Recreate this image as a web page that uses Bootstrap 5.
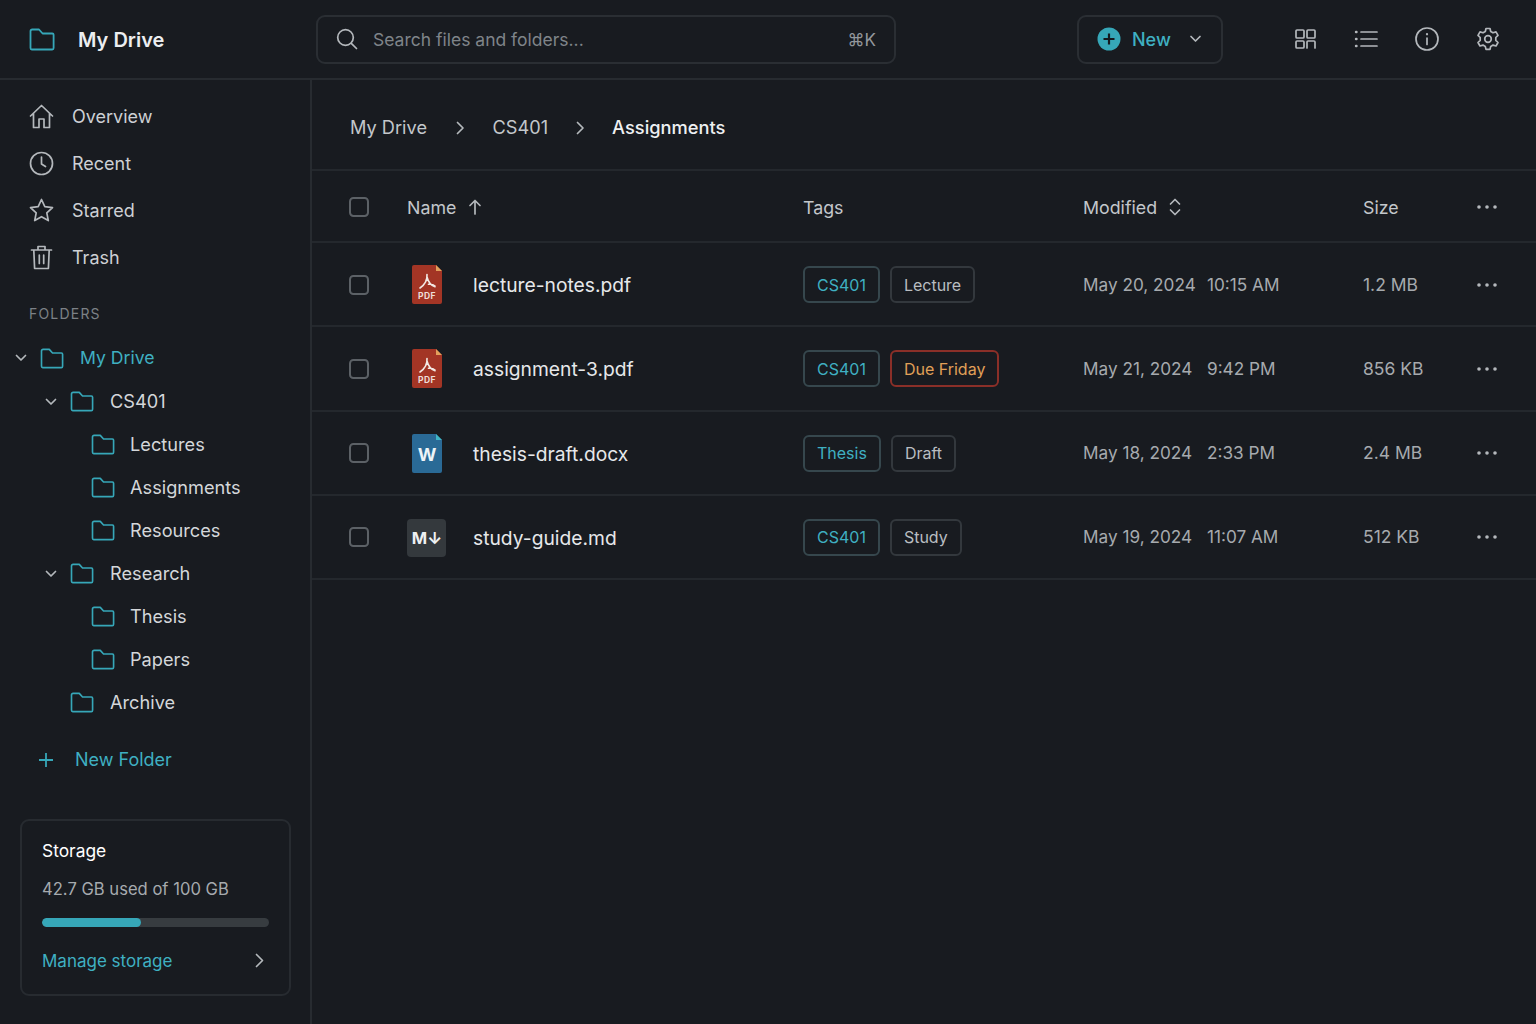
<!DOCTYPE html>
<html lang="en">
<head>
  <meta charset="UTF-8">
  <meta name="viewport" content="width=device-width, initial-scale=1">
  <title>My Drive</title>
  <link href="https://cdn.jsdelivr.net/npm/bootstrap@5.3.2/dist/css/bootstrap.min.css" rel="stylesheet">
  <style>
    html, body { height: 100%; }
    body { background: #181b20; color: #d4d7da; font-family: Inter, "Liberation Sans", sans-serif; font-size: 18px; overflow: hidden; }
    svg { display: block; flex: none; }
    .ico { fill: none; stroke: #b4b8bc; stroke-width: 1.7; stroke-linecap: round; stroke-linejoin: round; }
    .teal-ico { fill: none; stroke: #36a7b8; stroke-width: 1.8; stroke-linejoin: round; }
    .teal { color: #3fb0c2; }

    .top-bar { height: 80px; border-bottom: 2px solid #272b30; }
    .brand-box { width: 316px; padding: 1px 0 0 29px; gap: 23px; font-size: 20px; font-weight: 600; color: #eceef0; }
    .brand-box svg { margin-top: -1px; }
    .search-box { width: 580px; height: 49px; border: 2px solid #2a2e33; border-radius: 9px; padding: 0 18px; gap: 15px; color: #7f8489; margin-right: 181px; font-size: 17.5px; }
    .search-box span { padding-top: 3px; }
    .search-kbd { color: #93979c; font-size: 17px; }
    .new-btn { width: 146px; height: 49px; border: 2px solid #2a2e33; border-radius: 9px; padding-left: 18px; gap: 11px; color: #3fb0c2; font-weight: 500; }
    .new-btn svg:last-child { margin-left: 7px; }
    .tool-icons { margin-left: 70px; gap: 37px; }

    .side-pane { width: 312px; height: 944px; border-right: 2px solid #272b30; flex: none; }
    .side-nav { padding-top: 13px; }
    .side-link { height: 47px; padding-left: 29px; gap: 18px; color: #cdd0d4; }
    .side-title { font-size: 14px; letter-spacing: 1.2px; color: #7c8186; padding-left: 29px; margin-top: 24px; margin-bottom: 14px; line-height: 17px; }
    .tree-row { height: 43px; gap: 17px; color: #d4d7da; font-size: 18.2px; }
    .tree-row > span { margin-left: -1px; }
    .tree-first { height: 44px; }
    .tree-first .teal { font-size: 17.6px; }
    .tree-row .tree-caret { width: 12px; margin-right: -4px; }
    .lvl0 { padding-left: 15px; }
    .lvl1 { padding-left: 45px; }
    .lvl2 { padding-left: 91px; gap: 15px; }
    .lvl1-flat { padding-left: 70px; }
    .add-folder { padding-left: 37px; gap: 20px; height: 43px; margin-top: 14px; color: #3fb0c2; }
    .store-card { background: transparent; border: 2px solid #272b30; border-radius: 9px; margin: auto 20px 28px; height: 177px; padding: 17px 20px 0 20px; font-size: 17px; width: 271px; }
    .store-name { font-size: 17.4px; }
    .store-used { margin-top: 13px; font-size: 16.6px; color: #a6aaae; }
    .store-bar { height: 9px; background: #373c40; border-radius: 5px; margin-top: 16px; }
    .store-bar .progress-bar { background: #36a7b8; border-radius: 5px; }
    .store-link { margin-top: 22px; }
    .store-link svg { margin: -2px 5px 0 0; }

    .crumb-bar { height: 91px; border-bottom: 2px solid #24282d; padding: 6px 0 0 38px; font-size: 18.2px; color: #c3c7cb; }
    .crumb-sep { margin: 0 27.5px 0 29px; }
    .crumb-sep-b { margin: 0 27.5px 0 27.5px; }
    .crumb-now { color: #eef0f2; font-weight: 500; font-size: 18.3px; }

    .file-grid { display: grid; grid-template-columns: 58px 396px 280px 280px 114px 1fr; align-items: center; padding: 1px 0 0 37px; border-bottom: 2px solid #24282d; }
    .head-row { height: 72px; color: #c3c7cb; font-size: 17.8px; }
    .head-row > div { margin-top: 3px; }
    .head-row > div svg { margin-top: -3px; }
    .body-row { height: 84.25px; font-size: 17.5px; }
    .tick { width: 20px; height: 20px; border: 2px solid #5c6166; border-radius: 3px; background: transparent; margin: 0; }
    .tick:focus { box-shadow: none; border-color: #5c6166; }
    .file-name { gap: 27px; font-size: 19.25px; color: #e6e8ea; }
    .file-name span { padding-top: 2px; }
    .file-ico { width: 39px; }
    .md-ico { margin-top: 2px; }
    .tag-chip { height: 37px; padding: 0 12px; border: 2px solid #33383d; border-radius: 6px; font-size: 16px; color: #b9bdc1; background: transparent; }
    .tag-row { gap: 10px; }
    .tag-teal { color: #3fb0c2; border-color: #36474d; }
    .tag-due { color: #e0a058; border-color: #8a2f28; }
    .date-cell { color: #a6aaae; font-size: 17.2px; }
    .date-part { display: inline-block; width: 124px; }
    .size-cell { color: #a6aaae; }
  </style>
</head>
<body>
  <svg width="0" height="0" class="position-absolute">
    <symbol id="folder" viewBox="0 0 26 23"><path d="M1.500 3.200C1.500 2.200 2.200 1.500 3.200 1.500H10l3.600 4H23.300c.8 0 1.300.5 1.300 1.300V20c0 .9-.5 1.500-1.400 1.500H2.800c-.8 0-1.300-.6-1.300-1.400z"/></symbol>
    <symbol id="caret" viewBox="0 0 12 8"><path d="M1.500 1.500 6 6l4.500-4.500"/></symbol>
    <symbol id="more" viewBox="0 0 20 4"><circle cx="2" cy="2" r="1.800" fill="#b4b8bc"/><circle cx="10" cy="2" r="1.800" fill="#b4b8bc"/><circle cx="18" cy="2" r="1.800" fill="#b4b8bc"/></symbol>
    <symbol id="pdf" viewBox="0 0 30 39"><path d="M2 0H24L30 6V37a2 2 0 0 1-2 2H2a2 2 0 0 1-2-2V2a2 2 0 0 1 2-2z" fill="#a33525"/><path d="M24 0 30 6H24z" fill="#e3a05c"/><path d="M15 9.500c.4 5-2 10-7 13.500M15 12c1 4 3 8 8 9.800M16.500 19.300c2.500-.3 4.700 0 6.500 1.700" fill="none" stroke="#f2e9e4" stroke-width="1.600" stroke-linecap="round"/></symbol>
    <symbol id="word" viewBox="0 0 30 39"><path d="M2 0H24L30 6V37a2 2 0 0 1-2 2H2a2 2 0 0 1-2-2V2a2 2 0 0 1 2-2z" fill="#2a6a96"/><path d="M24 0 30 6H24z" fill="#3fb6c6"/></symbol>
  </svg>

  <header class="top-bar d-flex align-items-center">
    <div class="brand-box d-flex align-items-center">
      <svg width="26" height="23" class="teal-ico"><use href="#folder"/></svg>
      My Drive
    </div>
    <div class="search-box d-flex align-items-center">
      <svg width="22" height="22" viewBox="0 0 22 22" class="ico"><circle cx="9.500" cy="9.500" r="7.800"/><path d="m15.300 15.300 5.200 5.200"/></svg>
      <span class="flex-grow-1">Search files and folders...</span>
      <span class="search-kbd">⌘K</span>
    </div>
    <div class="new-btn d-flex align-items-center">
      <svg width="24" height="24" viewBox="0 0 24 24"><circle cx="12" cy="12" r="11.500" fill="#36a7b8"/><path d="M12 6.500v11M6.500 12h11" stroke="#14191e" stroke-width="2.200"/></svg>
      New
      <svg width="13" height="8" class="ico"><use href="#caret"/></svg>
    </div>
    <div class="tool-icons d-flex align-items-center">
      <svg width="24" height="24" viewBox="0 0 24 24" class="ico"><rect x="3" y="3" width="8" height="8" rx="1"/><rect x="14" y="3" width="8" height="8" rx="1"/><rect x="3" y="14" width="8" height="7" rx="1"/><path d="M14 21v-6a1 1 0 0 1 1-1h6a1 1 0 0 1 1 1v6"/></svg>
      <svg width="24" height="24" viewBox="0 0 24 24" class="ico"><path d="M7 5h16M7 12h16M7 19h16"/><path d="M2 5h.5M2 12h.5M2 19h.5" stroke-width="2.400"/></svg>
      <svg width="24" height="24" viewBox="0 0 24 24" class="ico"><circle cx="12" cy="12" r="11"/><path d="M12 11v6.500"/><path d="M12 7v.3" stroke-width="2.200"/></svg>
      <svg width="24" height="24" viewBox="0 0 24 24" class="ico"><circle cx="12" cy="12" r="3.300"/><path d="M10 1.500h4l.7 3 2.300 1.300 3-.9 2 3.500-2.200 2.100v2.900l2.200 2.100-2 3.500-3-.9-2.300 1.300-.7 3h-4l-.7-3L7 18.100l-3 .9-2-3.500 2.200-2.100v-2.900L2 8.400l2-3.500 3 .9 2.300-1.300z"/></svg>
    </div>
  </header>

  <div class="d-flex">
    <aside class="side-pane d-flex flex-column">
      <nav class="nav flex-column side-nav">
        <a class="side-link d-flex align-items-center text-decoration-none" href="#">
          <svg width="25" height="25" viewBox="0 0 25 25" class="ico"><path d="M1.500 12 12.500 1.500 23.500 12M4.500 9.500V23.500H10V15h5v8.500h5.500V9.500"/></svg>Overview</a>
        <a class="side-link d-flex align-items-center text-decoration-none" href="#">
          <svg width="25" height="25" viewBox="0 0 25 25" class="ico"><circle cx="12.500" cy="12.500" r="11"/><path d="M12.500 6v7l4 2.500"/></svg>Recent</a>
        <a class="side-link d-flex align-items-center text-decoration-none" href="#">
          <svg width="25" height="25" viewBox="0 0 25 25" class="ico"><path d="m12.500 1.500 3.300 7.200 7.700.9-5.700 5.300 1.500 7.700-6.800-3.900-6.800 3.900 1.500-7.700-5.700-5.300 7.700-.9z"/></svg>Starred</a>
        <a class="side-link d-flex align-items-center text-decoration-none" href="#">
          <svg width="25" height="25" viewBox="0 0 25 25" class="ico"><path d="M2.500 5h20M9 5V1.500h7V5M4.800 5l.8 18.500h13.800L20.200 5M10.300 10v8.500M14.700 10v8.500"/></svg>Trash</a>
      </nav>

      <div class="side-title">FOLDERS</div>

      <div class="tree-row tree-first lvl0 d-flex align-items-center"><svg width="12" height="8" class="ico tree-caret"><use href="#caret"/></svg><svg width="24" height="21" class="teal-ico"><use href="#folder"/></svg><span class="teal">My Drive</span></div>
      <div class="tree-row lvl1 d-flex align-items-center"><svg width="12" height="8" class="ico tree-caret"><use href="#caret"/></svg><svg width="24" height="21" class="teal-ico"><use href="#folder"/></svg><span>CS401</span></div>
      <div class="tree-row lvl2 d-flex align-items-center"><svg width="24" height="21" class="teal-ico"><use href="#folder"/></svg>Lectures</div>
      <div class="tree-row lvl2 d-flex align-items-center"><svg width="24" height="21" class="teal-ico"><use href="#folder"/></svg>Assignments</div>
      <div class="tree-row lvl2 d-flex align-items-center"><svg width="24" height="21" class="teal-ico"><use href="#folder"/></svg>Resources</div>
      <div class="tree-row lvl1 d-flex align-items-center"><svg width="12" height="8" class="ico tree-caret"><use href="#caret"/></svg><svg width="24" height="21" class="teal-ico"><use href="#folder"/></svg><span>Research</span></div>
      <div class="tree-row lvl2 d-flex align-items-center"><svg width="24" height="21" class="teal-ico"><use href="#folder"/></svg>Thesis</div>
      <div class="tree-row lvl2 d-flex align-items-center"><svg width="24" height="21" class="teal-ico"><use href="#folder"/></svg>Papers</div>
      <div class="tree-row lvl1-flat d-flex align-items-center"><svg width="24" height="21" class="teal-ico"><use href="#folder"/></svg><span>Archive</span></div>

      <div class="add-folder d-flex align-items-center">
        <svg width="18" height="18" viewBox="0 0 18 18"><path d="M9 2v14M2 9h14" stroke="#36a7b8" stroke-width="1.800"/></svg>
        New Folder
      </div>

      <div class="card store-card">
        <div class="store-name text-white">Storage</div>
        <div class="store-used">42.7 GB used of 100 GB</div>
        <div class="progress store-bar"><div class="progress-bar" style="width: 43.5%"></div></div>
        <div class="store-link d-flex align-items-center justify-content-between teal">
          Manage storage
          <svg width="9" height="15" viewBox="0 0 9 15" class="ico"><path d="m1.500 1.500 6 6-6 6"/></svg>
        </div>
      </div>
    </aside>

    <main class="flex-grow-1">
      <div class="crumb-bar d-flex align-items-center">
        My Drive
        <svg width="9" height="14" viewBox="0 0 9 14" class="ico crumb-sep"><path d="m1.500 1.500 5.500 5.500-5.500 5.500"/></svg>
        CS401
        <svg width="9" height="14" viewBox="0 0 9 14" class="ico crumb-sep-b"><path d="m1.500 1.500 5.500 5.500-5.500 5.500"/></svg>
        <span class="crumb-now">Assignments</span>
      </div>

      <div class="file-grid head-row">
        <input class="form-check-input tick" type="checkbox">
        <div class="d-flex align-items-center gap-2">Name <svg width="14" height="16" viewBox="0 0 14 16" class="ico ms-1"><path d="M7 15V1.500M2 6.500l5-5 5 5"/></svg></div>
        <div>Tags</div>
        <div class="d-flex align-items-center gap-2">Modified <svg width="12" height="18" viewBox="0 0 12 18" class="ico ms-1"><path d="m1.500 6 4.500-4.500L10.500 6M1.500 12l4.500 4.500 4.500-4.500"/></svg></div>
        <div>Size</div>
        <svg width="20" height="4"><use href="#more"/></svg>
      </div>

      <div class="file-grid body-row">
        <input class="form-check-input tick" type="checkbox">
        <div class="file-name d-flex align-items-center"><div class="file-ico d-flex justify-content-center"><svg width="30" height="39" viewBox="0 0 30 39"><use href="#pdf"/><text x="15" y="34" text-anchor="middle" font-family="Inter, sans-serif" font-size="8.500" font-weight="700" letter-spacing=".5" fill="#eeddd8">PDF</text></svg></div><span>lecture-notes.pdf</span></div>
        <div class="tag-row d-flex"><span class="tag-chip tag-teal d-flex align-items-center">CS401</span><span class="tag-chip d-flex align-items-center">Lecture</span></div>
        <div class="date-cell"><span class="date-part">May 20, 2024</span>10:15 AM</div>
        <div class="size-cell">1.2 MB</div>
        <svg width="20" height="4"><use href="#more"/></svg>
      </div>
      <div class="file-grid body-row">
        <input class="form-check-input tick" type="checkbox">
        <div class="file-name d-flex align-items-center"><div class="file-ico d-flex justify-content-center"><svg width="30" height="39" viewBox="0 0 30 39"><use href="#pdf"/><text x="15" y="34" text-anchor="middle" font-family="Inter, sans-serif" font-size="8.500" font-weight="700" letter-spacing=".5" fill="#eeddd8">PDF</text></svg></div><span>assignment-3.pdf</span></div>
        <div class="tag-row d-flex"><span class="tag-chip tag-teal d-flex align-items-center">CS401</span><span class="tag-chip tag-due d-flex align-items-center">Due Friday</span></div>
        <div class="date-cell"><span class="date-part">May 21, 2024</span>9:42 PM</div>
        <div class="size-cell">856 KB</div>
        <svg width="20" height="4"><use href="#more"/></svg>
      </div>
      <div class="file-grid body-row">
        <input class="form-check-input tick" type="checkbox">
        <div class="file-name d-flex align-items-center"><div class="file-ico d-flex justify-content-center"><svg width="30" height="39" viewBox="0 0 30 39"><use href="#word"/><text x="15" y="27" text-anchor="middle" font-family="Inter, sans-serif" font-size="18" font-weight="700" fill="#eef4f8">W</text></svg></div><span>thesis-draft.docx</span></div>
        <div class="tag-row d-flex"><span class="tag-chip tag-teal d-flex align-items-center">Thesis</span><span class="tag-chip d-flex align-items-center">Draft</span></div>
        <div class="date-cell"><span class="date-part">May 18, 2024</span>2:33 PM</div>
        <div class="size-cell">2.4 MB</div>
        <svg width="20" height="4"><use href="#more"/></svg>
      </div>
      <div class="file-grid body-row">
        <input class="form-check-input tick" type="checkbox">
        <div class="file-name d-flex align-items-center"><div class="file-ico d-flex justify-content-center"><svg width="39" height="38" viewBox="0 0 39 38" class="md-ico"><rect width="39" height="38" rx="4" fill="#34393d"/><text x="20" y="25" text-anchor="middle" font-family="Inter, sans-serif" font-size="16.500" font-weight="700" fill="#eef0f1">M↓</text></svg></div><span>study-guide.md</span></div>
        <div class="tag-row d-flex"><span class="tag-chip tag-teal d-flex align-items-center">CS401</span><span class="tag-chip d-flex align-items-center">Study</span></div>
        <div class="date-cell"><span class="date-part">May 19, 2024</span>11:07 AM</div>
        <div class="size-cell">512 KB</div>
        <svg width="20" height="4"><use href="#more"/></svg>
      </div>
    </main>
  </div>

  <script src="https://cdn.jsdelivr.net/npm/bootstrap@5.3.2/dist/js/bootstrap.bundle.min.js"></script>
</body>
</html>
